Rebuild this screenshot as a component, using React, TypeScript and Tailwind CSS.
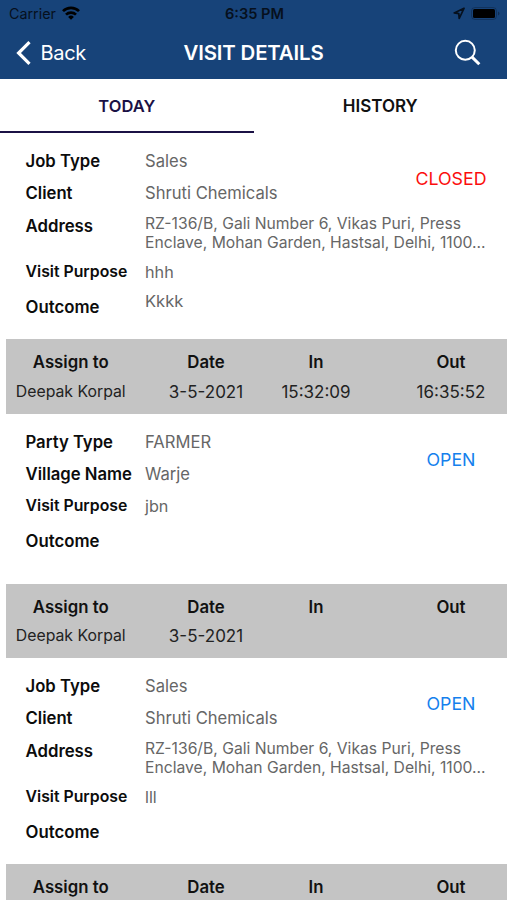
import { clsx } from "clsx";
import { type ReactNode } from "react";

type Field = {
  label: string;
  value?: string;
  kind: "text" | "address" | "purpose" | "outcome";
};

type Visit = {
  id: number;
  status: "OPEN" | "CLOSED";
  fields: Field[];
  assignee?: string;
  date?: string;
  timeIn?: string;
  timeOut?: string;
};

const ADDRESS_LINES =
  "RZ-136/B, Gali Number 6, Vikas Puri, Press\nEnclave, Mohan Garden, Hastsal, Delhi, 1100...";

const visits: Visit[] = [
  {
    id: 1,
    status: "CLOSED",
    fields: [
      { label: "Job Type", value: "Sales", kind: "text" },
      { label: "Client", value: "Shruti Chemicals", kind: "text" },
      { label: "Address", value: ADDRESS_LINES, kind: "address" },
      { label: "Visit Purpose", value: "hhh", kind: "purpose" },
      { label: "Outcome", value: "Kkkk", kind: "outcome" }
    ],
    assignee: "Deepak Korpal",
    date: "3-5-2021",
    timeIn: "15:32:09",
    timeOut: "16:35:52"
  },
  {
    id: 2,
    status: "OPEN",
    fields: [
      { label: "Party Type", value: "FARMER", kind: "text" },
      { label: "Village Name", value: "Warje", kind: "text" },
      { label: "Visit Purpose", value: "jbn", kind: "purpose" },
      { label: "Outcome", kind: "outcome" }
    ],
    assignee: "Deepak Korpal",
    date: "3-5-2021"
  },
  {
    id: 3,
    status: "OPEN",
    fields: [
      { label: "Job Type", value: "Sales", kind: "text" },
      { label: "Client", value: "Shruti Chemicals", kind: "text" },
      { label: "Address", value: ADDRESS_LINES, kind: "address" },
      { label: "Visit Purpose", value: "lll", kind: "purpose" },
      { label: "Outcome", kind: "outcome" }
    ]
  }
];

function StatusBar() {
  return (
    <div className="grid h-7 grid-cols-3 items-center pr-[7px] pl-[9px] text-[14.3px] leading-none text-[#06101d]">
      <div className="flex items-center gap-1.5">
        <span>Carrier</span>
        <svg className="mb-0.5" width="18" height="14" viewBox="0 0 18 14" fill="none" stroke="#000" strokeWidth="2.7">
          <path d="M1 5.1a11.4 11.4 0 0 1 16 0" />
          <path d="M4 8.6a7.1 7.1 0 0 1 10 0" />
          <path d="M9 13.8 6.1 10.9a4.1 4.1 0 0 1 5.8 0Z" fill="#000" stroke="none" />
        </svg>
      </div>
      <span className="text-center text-[14.6px] font-semibold">6:35 PM</span>
      <div className="mb-0.5 flex items-center justify-end gap-[6px]">
        <svg width="13" height="13" viewBox="0 0 13 13" fill="none" stroke="currentColor" strokeWidth="1.7" strokeLinejoin="round">
          <path d="M12 1.3 2.2 5.9l4.6.7.4 4.9Z" />
        </svg>
        <svg width="29" height="13" viewBox="0 0 29 13">
          <rect x="0.5" y="0.5" width="25" height="12" rx="3.5" fill="none" stroke="currentColor" strokeOpacity="0.3" />
          <rect x="2" y="2" width="22" height="9" rx="1.5" fill="#000" />
          <path d="M27 4.5q1.5.6 1.5 2t-1.5 2Z" fill="currentColor" fillOpacity="0.4" />
        </svg>
      </div>
    </div>
  );
}

function NavBar() {
  return (
    <div className="grid h-[49px] grid-cols-3 items-center text-white">
      <button type="button" className="flex items-center gap-[9.5px] pl-4 text-left text-[20px] tracking-[-0.3px]">
        <svg width="15" height="24" viewBox="0 0 15 24" fill="none" stroke="currentColor" strokeWidth="3.2">
          <path d="M13.5 1.2 2.6 12l10.9 10.8" />
        </svg>
        Back
      </button>
      <h1 className="pt-px text-center text-[20.4px] font-semibold tracking-[-0.15px] whitespace-nowrap">
        VISIT DETAILS
      </h1>
      <button type="button" aria-label="Search" className="flex justify-end pr-[26px]">
        <svg width="27" height="27" viewBox="0 0 27 27" fill="none" stroke="currentColor">
          <circle cx="11.3" cy="11.3" r="9.5" strokeWidth="2" />
          <path d="m18.1 18.1 7.2 7.2" strokeWidth="3" />
        </svg>
      </button>
    </div>
  );
}

function Tab({ children, active = false }: { children: ReactNode; active?: boolean }) {
  return (
    <button
      type="button"
      className={clsx(
        "h-[53.8px] flex-1 border-b-[2.5px] font-semibold",
        active
          ? "border-[#1b1145] pt-0.5 text-[16.5px] text-[#1b1145]"
          : "border-transparent pt-[3px] text-[17px] text-[#111]"
      )}
    >
      {children}
    </button>
  );
}

const rowStyles = {
  text: { row: "h-8 pt-1.5", label: "text-[16.7px]", value: "text-[16.6px]" },
  address: { row: "h-[47px] pt-1.5", label: "pt-px text-[16.8px]", value: "-mt-px text-[15.7px] leading-[19px]" },
  purpose: { row: "h-[29px] pt-[3px]", label: "text-[15.8px]", value: "text-[16.2px]" },
  outcome: { row: "h-[52px] pt-[3px]", label: "pt-1.5 text-[16.8px]", value: "text-[16.5px]" }
};

function FieldRow({ field }: { field: Field }) {
  const styles = rowStyles[field.kind];
  return (
    <div className={clsx("flex items-start leading-5", styles.row)}>
      <span className={clsx("w-[119.5px] shrink-0 font-semibold whitespace-nowrap text-[#0c0c0c]", styles.label)}>
        {field.label}
      </span>
      <span className={clsx("whitespace-pre text-[#666]", styles.value)}>{field.value}</span>
    </div>
  );
}

function SummaryCell({ title, value, compact = false }: { title: string; value?: string; compact?: boolean }) {
  return (
    <div className="flex flex-col items-center text-[16.8px] leading-5 whitespace-nowrap text-[#111]">
      <span className="font-semibold">{title}</span>
      <span className={clsx("mt-[9.5px] h-5 text-[#222]", compact ? "text-[15.8px]" : "text-[17px]")}>{value}</span>
    </div>
  );
}

function VisitCard({ visit }: { visit: Visit }) {
  const hasAddress = visit.fields.some((field) => field.kind === "address");
  const details = visit.fields.filter((field) => field.kind === "text" || field.kind === "address");
  const notes = visit.fields.filter((field) => field.kind === "purpose" || field.kind === "outcome");

  return (
    <article>
      <div className={clsx("relative pt-[12px] pl-[25.5px]", hasAddress ? "h-[206.6px]" : "h-[170px]")}>
        {details.map((field) => (
          <FieldRow key={field.label} field={field} />
        ))}
        <div className="pt-[3px]">
          {notes.map((field) => (
            <FieldRow key={field.label} field={field} />
          ))}
        </div>
        <span
          className={clsx(
            "absolute top-[34px] right-0 w-28 text-center text-[17.8px] leading-6",
            visit.status === "CLOSED" ? "text-[#fb0d0d]" : "text-[#1580ed]"
          )}
        >
          {visit.status}
        </span>
      </div>
      <div className="ml-1.5 grid h-[74.2px] grid-cols-[129.5px_141px_79px_191px] bg-[#c4c4c4] pt-[13px]">
        <SummaryCell title="Assign to" value={visit.assignee} compact />
        <SummaryCell title="Date" value={visit.date} />
        <SummaryCell title="In" value={visit.timeIn} />
        <SummaryCell title="Out" value={visit.timeOut} />
      </div>
    </article>
  );
}

export default function App() {
  return (
    <div className="h-[900px] w-[507px] overflow-hidden bg-white font-['Inter',sans-serif]">
      <header className="h-[79px] bg-[#174379]">
        <StatusBar />
        <NavBar />
      </header>
      <nav className="flex">
        <Tab active>TODAY</Tab>
        <Tab>HISTORY</Tab>
      </nav>
      <main>
        {visits.map((visit) => (
          <VisitCard key={visit.id} visit={visit} />
        ))}
      </main>
    </div>
  );
}
